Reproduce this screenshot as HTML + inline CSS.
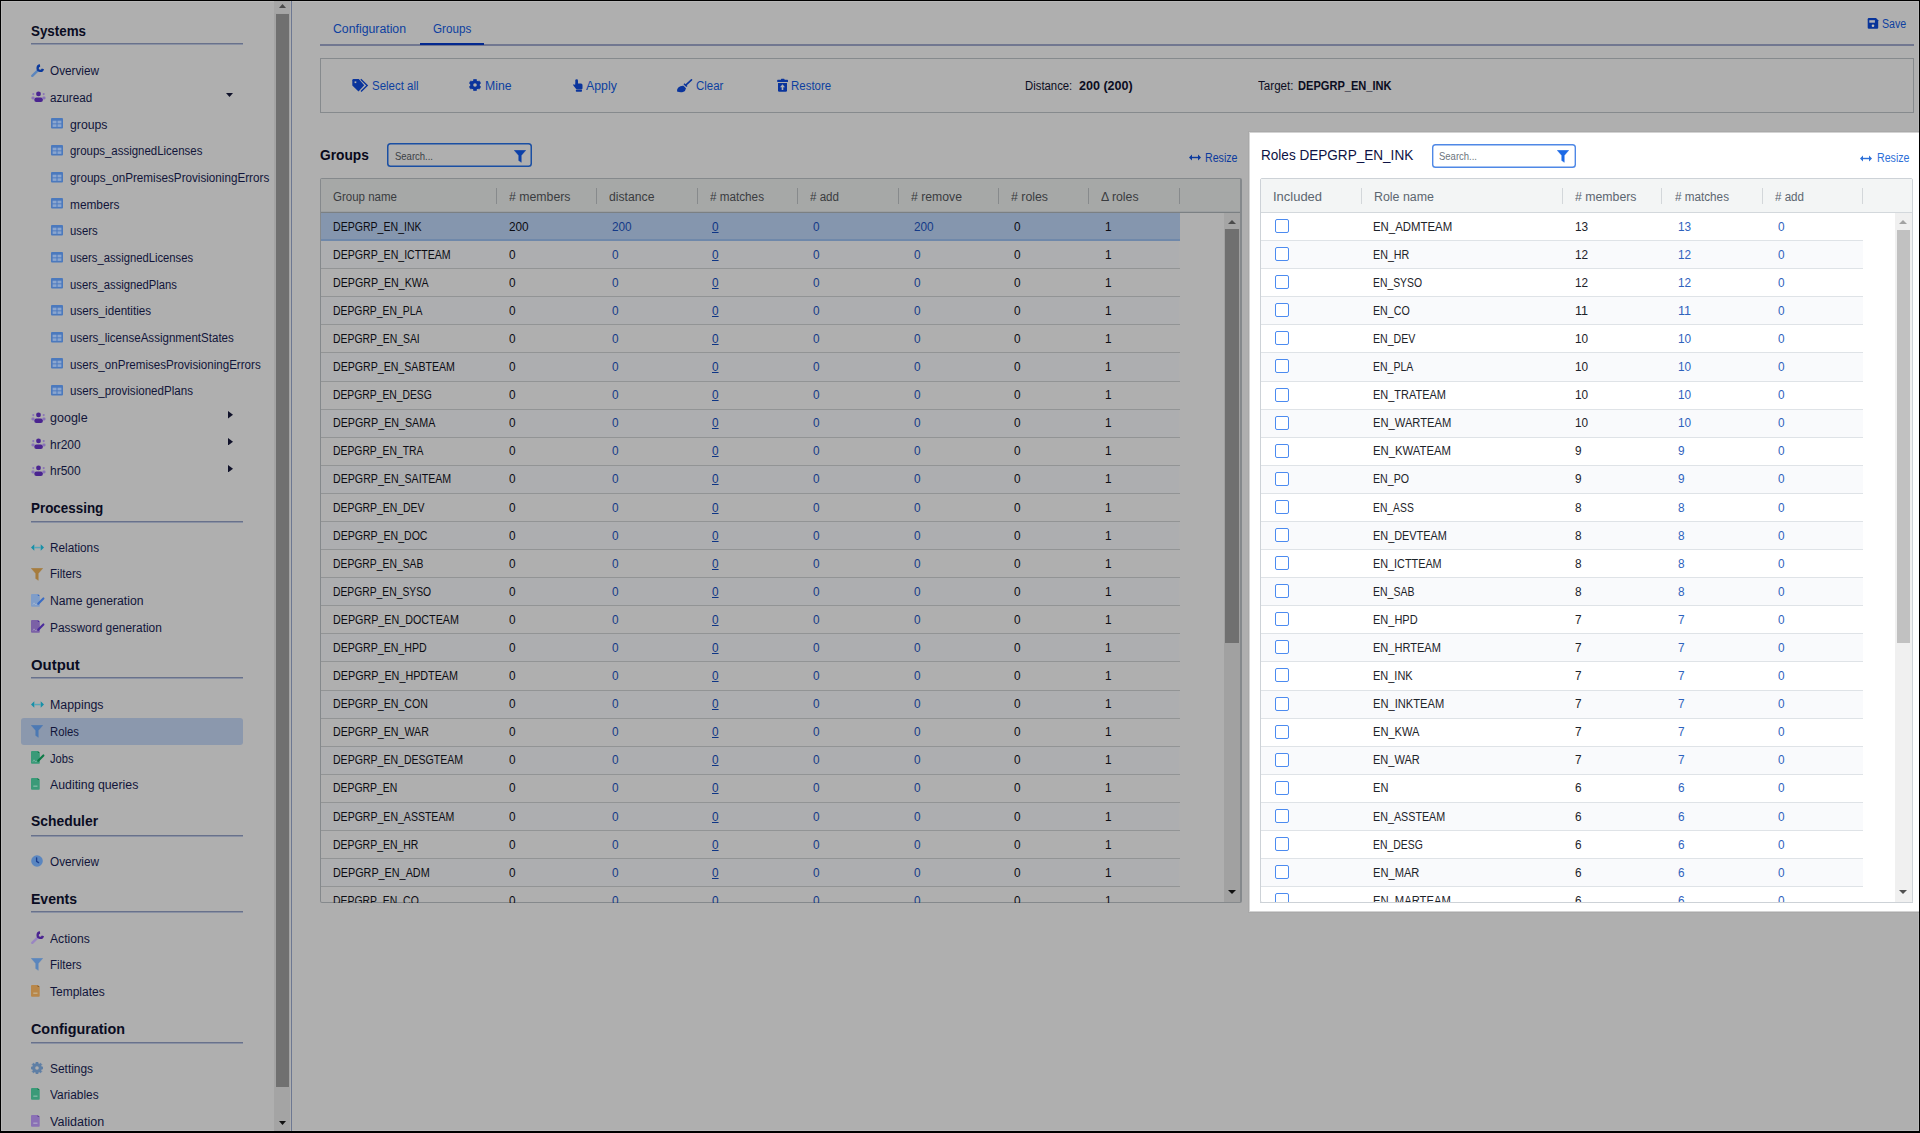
<!DOCTYPE html>
<html><head><meta charset="utf-8"><style>
html,body{margin:0;padding:0;}
body{width:1920px;height:1133px;position:relative;overflow:hidden;font-family:"Liberation Sans",sans-serif;}
.b{position:absolute;display:block;}
.t{position:absolute;white-space:nowrap;line-height:1;transform-origin:0 0;}
</style></head>
<body>
<div class="b" style="left:0px;top:0px;width:1920px;height:1133px;background:#000;"></div>
<div class="b" style="left:1px;top:1px;width:1918px;height:1130px;background:#afafaf;box-sizing:border-box;border:1px solid #b9b9b9;"></div>
<div class="t" style="left:31.00px;top:22.88px;font-size:15.5px;color:#0a0c22;font-weight:700;transform:scaleX(0.863);">Systems</div>
<div class="b" style="left:31px;top:43px;width:212px;height:1px;background:#68718b;"></div>
<div class="b" style="left:31px;top:44px;width:212px;height:1px;background:#8a91a3;"></div>
<div class="t" style="left:50.00px;top:65.34px;font-size:12px;color:#11153a;transform:scaleX(0.980);">Overview</div>
<svg class="b" style="left:30.5px;top:63.5px" width="14" height="14" viewBox="0 0 14 14"><path d="M1.3 11.8 L6.9 6.3" stroke="#5c86bd" stroke-width="2.4" stroke-linecap="round"/><path d="M9.06 1.51 A2.7 2.7 0 1 0 11.91 4.90" stroke="#0c3a9c" stroke-width="2.3" fill="none" stroke-linecap="butt"/></svg>
<div class="t" style="left:50.00px;top:92.01px;font-size:12px;color:#11153a;transform:scaleX(0.971);">azuread</div>
<svg class="b" style="left:31px;top:91.47px" width="15" height="12" viewBox="0 0 15 12"><circle cx="7.5" cy="2.9" r="2.4" fill="#4a2490"/><rect x="3.3" y="6.6" width="8.6" height="4.3" rx="2" fill="#4a2490"/><circle cx="2.3" cy="3.1" r="1.05" fill="#8a74b8"/><circle cx="12.7" cy="3.1" r="1.05" fill="#8a74b8"/><rect x="0.4" y="5.6" width="3.3" height="2.8" rx="1.3" fill="#8a74b8"/><rect x="11.3" y="5.6" width="3.3" height="2.8" rx="1.3" fill="#8a74b8"/></svg>
<div class="t" style="left:70.00px;top:118.68px;font-size:12px;color:#11153a;transform:scaleX(1.022);">groups</div>
<svg class="b" style="left:51px;top:118.44px" width="12" height="11" viewBox="0 0 12 11"><rect x="0" y="0" width="12" height="10.5" rx="1" fill="#4b79bd"/><rect x="1.6" y="2.7" width="3.9" height="2.7" fill="#8ba6cf"/><rect x="6.5" y="2.7" width="3.9" height="2.7" fill="#8ba6cf"/><rect x="1.6" y="6.3" width="3.9" height="2.6" fill="#8ba6cf"/><rect x="6.5" y="6.3" width="3.9" height="2.6" fill="#8ba6cf"/></svg>
<div class="t" style="left:70.00px;top:145.35px;font-size:12px;color:#11153a;transform:scaleX(0.954);">groups_assignedLicenses</div>
<svg class="b" style="left:51px;top:145.10999999999999px" width="12" height="11" viewBox="0 0 12 11"><rect x="0" y="0" width="12" height="10.5" rx="1" fill="#4b79bd"/><rect x="1.6" y="2.7" width="3.9" height="2.7" fill="#8ba6cf"/><rect x="6.5" y="2.7" width="3.9" height="2.7" fill="#8ba6cf"/><rect x="1.6" y="6.3" width="3.9" height="2.6" fill="#8ba6cf"/><rect x="6.5" y="6.3" width="3.9" height="2.6" fill="#8ba6cf"/></svg>
<div class="t" style="left:70.00px;top:172.02px;font-size:12px;color:#11153a;transform:scaleX(0.973);">groups_onPremisesProvisioningErrors</div>
<svg class="b" style="left:51px;top:171.78px" width="12" height="11" viewBox="0 0 12 11"><rect x="0" y="0" width="12" height="10.5" rx="1" fill="#4b79bd"/><rect x="1.6" y="2.7" width="3.9" height="2.7" fill="#8ba6cf"/><rect x="6.5" y="2.7" width="3.9" height="2.7" fill="#8ba6cf"/><rect x="1.6" y="6.3" width="3.9" height="2.6" fill="#8ba6cf"/><rect x="6.5" y="6.3" width="3.9" height="2.6" fill="#8ba6cf"/></svg>
<div class="t" style="left:70.00px;top:198.69px;font-size:12px;color:#11153a;transform:scaleX(0.988);">members</div>
<svg class="b" style="left:51px;top:198.45000000000002px" width="12" height="11" viewBox="0 0 12 11"><rect x="0" y="0" width="12" height="10.5" rx="1" fill="#4b79bd"/><rect x="1.6" y="2.7" width="3.9" height="2.7" fill="#8ba6cf"/><rect x="6.5" y="2.7" width="3.9" height="2.7" fill="#8ba6cf"/><rect x="1.6" y="6.3" width="3.9" height="2.6" fill="#8ba6cf"/><rect x="6.5" y="6.3" width="3.9" height="2.6" fill="#8ba6cf"/></svg>
<div class="t" style="left:70.00px;top:225.36px;font-size:12px;color:#11153a;transform:scaleX(0.943);">users</div>
<svg class="b" style="left:51px;top:225.12px" width="12" height="11" viewBox="0 0 12 11"><rect x="0" y="0" width="12" height="10.5" rx="1" fill="#4b79bd"/><rect x="1.6" y="2.7" width="3.9" height="2.7" fill="#8ba6cf"/><rect x="6.5" y="2.7" width="3.9" height="2.7" fill="#8ba6cf"/><rect x="1.6" y="6.3" width="3.9" height="2.6" fill="#8ba6cf"/><rect x="6.5" y="6.3" width="3.9" height="2.6" fill="#8ba6cf"/></svg>
<div class="t" style="left:70.00px;top:252.03px;font-size:12px;color:#11153a;transform:scaleX(0.936);">users_assignedLicenses</div>
<svg class="b" style="left:51px;top:251.79px" width="12" height="11" viewBox="0 0 12 11"><rect x="0" y="0" width="12" height="10.5" rx="1" fill="#4b79bd"/><rect x="1.6" y="2.7" width="3.9" height="2.7" fill="#8ba6cf"/><rect x="6.5" y="2.7" width="3.9" height="2.7" fill="#8ba6cf"/><rect x="1.6" y="6.3" width="3.9" height="2.6" fill="#8ba6cf"/><rect x="6.5" y="6.3" width="3.9" height="2.6" fill="#8ba6cf"/></svg>
<div class="t" style="left:70.00px;top:278.70px;font-size:12px;color:#11153a;transform:scaleX(0.938);">users_assignedPlans</div>
<svg class="b" style="left:51px;top:278.46000000000004px" width="12" height="11" viewBox="0 0 12 11"><rect x="0" y="0" width="12" height="10.5" rx="1" fill="#4b79bd"/><rect x="1.6" y="2.7" width="3.9" height="2.7" fill="#8ba6cf"/><rect x="6.5" y="2.7" width="3.9" height="2.7" fill="#8ba6cf"/><rect x="1.6" y="6.3" width="3.9" height="2.6" fill="#8ba6cf"/><rect x="6.5" y="6.3" width="3.9" height="2.6" fill="#8ba6cf"/></svg>
<div class="t" style="left:70.00px;top:305.37px;font-size:12px;color:#11153a;transform:scaleX(0.973);">users_identities</div>
<svg class="b" style="left:51px;top:305.13000000000005px" width="12" height="11" viewBox="0 0 12 11"><rect x="0" y="0" width="12" height="10.5" rx="1" fill="#4b79bd"/><rect x="1.6" y="2.7" width="3.9" height="2.7" fill="#8ba6cf"/><rect x="6.5" y="2.7" width="3.9" height="2.7" fill="#8ba6cf"/><rect x="1.6" y="6.3" width="3.9" height="2.6" fill="#8ba6cf"/><rect x="6.5" y="6.3" width="3.9" height="2.6" fill="#8ba6cf"/></svg>
<div class="t" style="left:70.00px;top:332.04px;font-size:12px;color:#11153a;transform:scaleX(0.963);">users_licenseAssignmentStates</div>
<svg class="b" style="left:51px;top:331.80000000000007px" width="12" height="11" viewBox="0 0 12 11"><rect x="0" y="0" width="12" height="10.5" rx="1" fill="#4b79bd"/><rect x="1.6" y="2.7" width="3.9" height="2.7" fill="#8ba6cf"/><rect x="6.5" y="2.7" width="3.9" height="2.7" fill="#8ba6cf"/><rect x="1.6" y="6.3" width="3.9" height="2.6" fill="#8ba6cf"/><rect x="6.5" y="6.3" width="3.9" height="2.6" fill="#8ba6cf"/></svg>
<div class="t" style="left:70.00px;top:358.71px;font-size:12px;color:#11153a;transform:scaleX(0.966);">users_onPremisesProvisioningErrors</div>
<svg class="b" style="left:51px;top:358.47px" width="12" height="11" viewBox="0 0 12 11"><rect x="0" y="0" width="12" height="10.5" rx="1" fill="#4b79bd"/><rect x="1.6" y="2.7" width="3.9" height="2.7" fill="#8ba6cf"/><rect x="6.5" y="2.7" width="3.9" height="2.7" fill="#8ba6cf"/><rect x="1.6" y="6.3" width="3.9" height="2.6" fill="#8ba6cf"/><rect x="6.5" y="6.3" width="3.9" height="2.6" fill="#8ba6cf"/></svg>
<div class="t" style="left:70.00px;top:385.38px;font-size:12px;color:#11153a;transform:scaleX(0.965);">users_provisionedPlans</div>
<svg class="b" style="left:51px;top:385.14000000000004px" width="12" height="11" viewBox="0 0 12 11"><rect x="0" y="0" width="12" height="10.5" rx="1" fill="#4b79bd"/><rect x="1.6" y="2.7" width="3.9" height="2.7" fill="#8ba6cf"/><rect x="6.5" y="2.7" width="3.9" height="2.7" fill="#8ba6cf"/><rect x="1.6" y="6.3" width="3.9" height="2.6" fill="#8ba6cf"/><rect x="6.5" y="6.3" width="3.9" height="2.6" fill="#8ba6cf"/></svg>
<div class="t" style="left:50.00px;top:412.05px;font-size:12px;color:#11153a;transform:scaleX(1.044);">google</div>
<svg class="b" style="left:31px;top:411.51000000000005px" width="15" height="12" viewBox="0 0 15 12"><circle cx="7.5" cy="2.9" r="2.4" fill="#4a2490"/><rect x="3.3" y="6.6" width="8.6" height="4.3" rx="2" fill="#4a2490"/><circle cx="2.3" cy="3.1" r="1.05" fill="#8a74b8"/><circle cx="12.7" cy="3.1" r="1.05" fill="#8a74b8"/><rect x="0.4" y="5.6" width="3.3" height="2.8" rx="1.3" fill="#8a74b8"/><rect x="11.3" y="5.6" width="3.3" height="2.8" rx="1.3" fill="#8a74b8"/></svg>
<div class="t" style="left:50.00px;top:438.72px;font-size:12px;color:#11153a;">hr200</div>
<svg class="b" style="left:31px;top:438.18px" width="15" height="12" viewBox="0 0 15 12"><circle cx="7.5" cy="2.9" r="2.4" fill="#4a2490"/><rect x="3.3" y="6.6" width="8.6" height="4.3" rx="2" fill="#4a2490"/><circle cx="2.3" cy="3.1" r="1.05" fill="#8a74b8"/><circle cx="12.7" cy="3.1" r="1.05" fill="#8a74b8"/><rect x="0.4" y="5.6" width="3.3" height="2.8" rx="1.3" fill="#8a74b8"/><rect x="11.3" y="5.6" width="3.3" height="2.8" rx="1.3" fill="#8a74b8"/></svg>
<div class="t" style="left:50.00px;top:465.39px;font-size:12px;color:#11153a;">hr500</div>
<svg class="b" style="left:31px;top:464.85px" width="15" height="12" viewBox="0 0 15 12"><circle cx="7.5" cy="2.9" r="2.4" fill="#4a2490"/><rect x="3.3" y="6.6" width="8.6" height="4.3" rx="2" fill="#4a2490"/><circle cx="2.3" cy="3.1" r="1.05" fill="#8a74b8"/><circle cx="12.7" cy="3.1" r="1.05" fill="#8a74b8"/><rect x="0.4" y="5.6" width="3.3" height="2.8" rx="1.3" fill="#8a74b8"/><rect x="11.3" y="5.6" width="3.3" height="2.8" rx="1.3" fill="#8a74b8"/></svg>
<svg class="b" style="left:225.5px;top:93px" width="7" height="4" viewBox="0 0 7 4"><path d="M0 0 H7 L3.5 4Z" fill="#10122a"/></svg>
<svg class="b" style="left:228px;top:411.31000000000006px" width="5" height="7.5" viewBox="0 0 5 7.5"><path d="M0 0 V7.5 L5 3.75Z" fill="#10122a"/></svg>
<svg class="b" style="left:228px;top:437.98px" width="5" height="7.5" viewBox="0 0 5 7.5"><path d="M0 0 V7.5 L5 3.75Z" fill="#10122a"/></svg>
<svg class="b" style="left:228px;top:464.65000000000003px" width="5" height="7.5" viewBox="0 0 5 7.5"><path d="M0 0 V7.5 L5 3.75Z" fill="#10122a"/></svg>
<div class="t" style="left:31.00px;top:499.88px;font-size:15.5px;color:#0a0c22;font-weight:700;transform:scaleX(0.865);">Processing</div>
<div class="b" style="left:31px;top:521px;width:212px;height:1px;background:#68718b;"></div>
<div class="b" style="left:31px;top:522px;width:212px;height:1px;background:#8a91a3;"></div>
<div class="t" style="left:50.00px;top:541.74px;font-size:12px;color:#11153a;transform:scaleX(0.980);">Relations</div>
<div class="t" style="left:50.00px;top:568.41px;font-size:12px;color:#11153a;transform:scaleX(0.965);">Filters</div>
<div class="t" style="left:50.00px;top:595.08px;font-size:12px;color:#11153a;transform:scaleX(1.016);">Name generation</div>
<div class="t" style="left:50.00px;top:621.75px;font-size:12px;color:#11153a;transform:scaleX(0.992);">Password generation</div>
<svg class="b" style="left:31px;top:544px" width="13" height="7" viewBox="0 0 13 7"><path d="M0 3.5 L3.3 0.3 V6.7Z M13 3.5 L9.7 0.3 V6.7Z" fill="#1790a8"/><rect x="3" y="2.8" width="7" height="1.5" fill="#5aa7b8"/></svg>
<svg class="b" style="left:31px;top:568px" width="12" height="13" viewBox="0 0 12 13"><path d="M0.2 0.3 H11.8 L7.3 5.4 V12.3 L4.7 10.6 V5.4Z" fill="#a67c3d" stroke="#a67c3d" stroke-width=".4" stroke-linejoin="round"/></svg>
<svg class="b" style="left:31.3px;top:593.6px" width="14" height="13" viewBox="0 0 14 13"><path d="M0 1 Q0 0 1 0 H6.8 L8.8 2 V12 Q8.8 12.8 8 12.8 H1 Q0 12.8 0 12Z" fill="#7f9dc8"/><path d="M6.8 0 L8.8 2 H6.8Z" fill="#3a6cc4"/><path d="M7.2 9.8 L12.4 4.4" stroke="#3a6cc4" stroke-width="2.1" stroke-linecap="round"/><path d="M1.8 10.8 L3 8.8 L4.2 10.6 L6 10.2" stroke="#cfd6dd" stroke-width=".6" fill="none" opacity=".6"/></svg>
<svg class="b" style="left:31.3px;top:620.3px" width="14" height="13" viewBox="0 0 14 13"><path d="M0 1 Q0 0 1 0 H6.8 L8.8 2 V12 Q8.8 12.8 8 12.8 H1 Q0 12.8 0 12Z" fill="#7b61a6"/><path d="M6.8 0 L8.8 2 H6.8Z" fill="#4a2b9c"/><path d="M7.2 9.8 L12.4 4.4" stroke="#4a2b9c" stroke-width="2.1" stroke-linecap="round"/><path d="M1.8 10.8 L3 8.8 L4.2 10.6 L6 10.2" stroke="#cfd6dd" stroke-width=".6" fill="none" opacity=".6"/></svg>
<div class="t" style="left:31.00px;top:656.88px;font-size:15.5px;color:#0a0c22;font-weight:700;transform:scaleX(0.961);">Output</div>
<div class="b" style="left:31px;top:677.3px;width:212px;height:1px;background:#68718b;"></div>
<div class="b" style="left:31px;top:678.3px;width:212px;height:1px;background:#8a91a3;"></div>
<div class="b" style="left:21px;top:717.5px;width:222px;height:27px;background:#8b98ad;border-radius:3px;"></div>
<div class="t" style="left:50.00px;top:699.24px;font-size:12px;color:#11153a;transform:scaleX(1.029);">Mappings</div>
<div class="t" style="left:50.00px;top:725.91px;font-size:12px;color:#11153a;transform:scaleX(0.940);">Roles</div>
<div class="t" style="left:50.00px;top:752.58px;font-size:12px;color:#11153a;transform:scaleX(0.930);">Jobs</div>
<div class="t" style="left:50.00px;top:779.25px;font-size:12px;color:#11153a;transform:scaleX(1.026);">Auditing queries</div>
<svg class="b" style="left:31px;top:701px" width="13" height="7" viewBox="0 0 13 7"><path d="M0 3.5 L3.3 0.3 V6.7Z M13 3.5 L9.7 0.3 V6.7Z" fill="#1790a8"/><rect x="3" y="2.8" width="7" height="1.5" fill="#5aa7b8"/></svg>
<svg class="b" style="left:31px;top:724.5px" width="12" height="13" viewBox="0 0 12 13"><path d="M0.2 0.3 H11.8 L7.3 5.4 V12.3 L4.7 10.6 V5.4Z" fill="#4c79b4" stroke="#4c79b4" stroke-width=".4" stroke-linejoin="round"/></svg>
<svg class="b" style="left:31.3px;top:751px" width="14" height="13" viewBox="0 0 14 13"><path d="M0 1 Q0 0 1 0 H6.8 L8.8 2 V12 Q8.8 12.8 8 12.8 H1 Q0 12.8 0 12Z" fill="#3a9a78"/><path d="M6.8 0 L8.8 2 H6.8Z" fill="#0b7a45"/><path d="M7.2 9.8 L12.4 4.4" stroke="#0b7a45" stroke-width="2.1" stroke-linecap="round"/><path d="M1.8 10.8 L3 8.8 L4.2 10.6 L6 10.2" stroke="#cfd6dd" stroke-width=".6" fill="none" opacity=".6"/></svg>
<svg class="b" style="left:31.3px;top:778px" width="10" height="13" viewBox="0 0 10 13"><path d="M0 1 Q0 0 1 0 H6.6 L8.7 2.1 V11 Q8.7 11.8 7.9 11.8 H1 Q0 11.8 0 11Z" fill="#3a9a78"/><path d="M6.6 0 L8.7 2.1 H6.6Z" fill="#0b7a45"/><rect x="2.3" y="7.6" width="4.2" height="1.1" fill="#d8e6de" opacity=".55"/></svg>
<div class="t" style="left:31.00px;top:813.38px;font-size:15.5px;color:#0a0c22;font-weight:700;transform:scaleX(0.895);">Scheduler</div>
<div class="b" style="left:31px;top:835px;width:212px;height:1px;background:#68718b;"></div>
<div class="b" style="left:31px;top:836px;width:212px;height:1px;background:#8a91a3;"></div>
<div class="t" style="left:50.00px;top:855.74px;font-size:12px;color:#11153a;transform:scaleX(0.980);">Overview</div>
<svg class="b" style="left:31.3px;top:854.6px" width="12" height="12" viewBox="0 0 12 12"><circle cx="6" cy="6" r="5.8" fill="#5a86c0"/><path d="M5.6 2.8 V6.4 L7.6 7.6" stroke="#1c3f8e" stroke-width="1.3" fill="none" stroke-linecap="round"/></svg>
<div class="t" style="left:31.00px;top:890.68px;font-size:15.5px;color:#0a0c22;font-weight:700;transform:scaleX(0.905);">Events</div>
<div class="b" style="left:31px;top:911px;width:212px;height:1px;background:#68718b;"></div>
<div class="b" style="left:31px;top:912px;width:212px;height:1px;background:#8a91a3;"></div>
<div class="t" style="left:50.00px;top:932.64px;font-size:12px;color:#11153a;transform:scaleX(1.011);">Actions</div>
<div class="t" style="left:50.00px;top:959.31px;font-size:12px;color:#11153a;transform:scaleX(0.965);">Filters</div>
<div class="t" style="left:50.00px;top:985.98px;font-size:12px;color:#11153a;">Templates</div>
<svg class="b" style="left:30.5px;top:931px" width="14" height="14" viewBox="0 0 14 14"><path d="M1.3 11.8 L6.9 6.3" stroke="#9a86c2" stroke-width="2.4" stroke-linecap="round"/><path d="M9.06 1.51 A2.7 2.7 0 1 0 11.91 4.90" stroke="#4b2490" stroke-width="2.3" fill="none" stroke-linecap="butt"/></svg>
<svg class="b" style="left:31.3px;top:957.8px" width="12" height="13" viewBox="0 0 12 13"><path d="M0.2 0.3 H11.8 L7.3 5.4 V12.3 L4.7 10.6 V5.4Z" fill="#5b86bd" stroke="#5b86bd" stroke-width=".4" stroke-linejoin="round"/></svg>
<svg class="b" style="left:31.3px;top:985px" width="10" height="13" viewBox="0 0 10 13"><path d="M0 1 Q0 0 1 0 H6.6 L8.7 2.1 V11 Q8.7 11.8 7.9 11.8 H1 Q0 11.8 0 11Z" fill="#b8874a"/><path d="M6.6 0 L8.7 2.1 H6.6Z" fill="#8a5a20"/><rect x="2.3" y="7.6" width="4.2" height="1.1" fill="#d8e6de" opacity=".55"/></svg>
<div class="t" style="left:31.00px;top:1020.58px;font-size:15.5px;color:#0a0c22;font-weight:700;transform:scaleX(0.926);">Configuration</div>
<div class="b" style="left:31px;top:1042px;width:212px;height:1px;background:#68718b;"></div>
<div class="b" style="left:31px;top:1043px;width:212px;height:1px;background:#8a91a3;"></div>
<div class="t" style="left:50.00px;top:1062.74px;font-size:12px;color:#11153a;transform:scaleX(0.993);">Settings</div>
<div class="t" style="left:50.00px;top:1089.41px;font-size:12px;color:#11153a;transform:scaleX(0.989);">Variables</div>
<div class="t" style="left:50.00px;top:1116.08px;font-size:12px;color:#11153a;transform:scaleX(1.044);">Validation</div>
<svg class="b" style="left:31px;top:1061.5px" width="12" height="12" viewBox="0 0 12 12"><polygon points="4.82,1.72 4.97,0.09 7.03,0.09 7.18,1.72 8.19,2.14 9.45,1.09 10.91,2.55 9.86,3.81 10.28,4.82 11.91,4.97 11.91,7.03 10.28,7.18 9.86,8.19 10.91,9.45 9.45,10.91 8.19,9.86 7.18,10.28 7.03,11.91 4.97,11.91 4.82,10.28 3.81,9.86 2.55,10.91 1.09,9.45 2.14,8.19 1.72,7.18 0.09,7.03 0.09,4.97 1.72,4.82 2.14,3.81 1.09,2.55 2.55,1.09 3.81,2.14" fill="#5f7fa5" stroke="#5f7fa5" stroke-width=".5" stroke-linejoin="round"/><circle cx="6.0" cy="6.0" r="4.5600000000000005" fill="#5f7fa5"/><circle cx="6.0" cy="6.0" r="1.7999999999999998" fill="#afafaf"/></svg>
<svg class="b" style="left:31.3px;top:1088.3px" width="10" height="13" viewBox="0 0 10 13"><path d="M0 1 Q0 0 1 0 H6.6 L8.7 2.1 V11 Q8.7 11.8 7.9 11.8 H1 Q0 11.8 0 11Z" fill="#3a9a78"/><path d="M6.6 0 L8.7 2.1 H6.6Z" fill="#0b7a45"/><rect x="2.3" y="7.6" width="4.2" height="1.1" fill="#d8e6de" opacity=".55"/></svg>
<svg class="b" style="left:31.3px;top:1115px" width="10" height="13" viewBox="0 0 10 13"><path d="M0 1 Q0 0 1 0 H6.6 L8.7 2.1 V11 Q8.7 11.8 7.9 11.8 H1 Q0 11.8 0 11Z" fill="#8a70b5"/><path d="M6.6 0 L8.7 2.1 H6.6Z" fill="#5a3f8f"/><rect x="2.3" y="7.6" width="4.2" height="1.1" fill="#d8e6de" opacity=".55"/></svg>
<div class="b" style="left:274px;top:1px;width:16px;height:1130px;background:#a4a4a4;"></div>
<div class="b" style="left:274px;top:1px;width:16px;height:12px;background:#a6a6a6;"></div>
<svg class="b" style="left:278.5px;top:4px" width="7" height="4" viewBox="0 0 7 4"><path d="M0 4 H7 L3.5 0Z" fill="#4a4a4a"/></svg>
<div class="b" style="left:276px;top:14px;width:13px;height:1073px;background:#707070;"></div>
<svg class="b" style="left:278.5px;top:1120.5px" width="7" height="4" viewBox="0 0 7 4"><path d="M0 0 H7 L3.5 4Z" fill="#111"/></svg>
<div class="b" style="left:291px;top:1px;width:1px;height:1130px;background:#6d7892;"></div>
<div class="t" style="left:333.00px;top:22.74px;font-size:12px;color:#0d3fa0;transform:scaleX(1.023);">Configuration</div>
<div class="t" style="left:432.80px;top:22.74px;font-size:12px;color:#0d3fa0;transform:scaleX(0.971);">Groups</div>
<div class="b" style="left:320px;top:44px;width:1594px;height:2px;background:#717790;"></div>
<div class="b" style="left:420px;top:43px;width:64px;height:2px;background:#03288f;"></div>
<svg class="b" style="left:1867px;top:17px" width="13" height="13" viewBox="0 0 13 13"><path d="M0.7 2.2 Q0.7 1.1 1.8 1.1 H9 L11.2 3.3 V10.7 Q11.2 11.8 10.1 11.8 H1.8 Q0.7 11.8 0.7 10.7Z" fill="#08349a"/><rect x="2.3" y="3.2" width="5.6" height="2.5" fill="#aeb0b8"/><circle cx="6" cy="8.8" r="1.3" fill="#c8c2b8"/></svg>
<div class="t" style="left:1881.70px;top:17.94px;font-size:12px;color:#0d3fa0;transform:scaleX(0.888);">Save</div>
<div class="b" style="left:320px;top:58px;width:1594px;height:55px;box-sizing:border-box;border:1px solid #868a8d;"></div>
<svg class="b" style="left:351px;top:78px" width="19" height="15" viewBox="0 0 19 15"><path d="M1.3 2.3 Q1.3 1.1 2.5 1.1 H7.8 L13.2 7.3 L7.5 13.4 L1.3 7.6Z" fill="#0a349c"/><rect x="3.6" y="3.4" width="1.7" height="1.7" fill="#b3b3b3"/><path d="M9.8 1.3 L16.2 7.4 L10 13.5" stroke="#0a349c" stroke-width="1.4" fill="none"/></svg>
<div class="t" style="left:371.50px;top:79.64px;font-size:12px;color:#0d3fa0;transform:scaleX(0.955);">Select all</div>
<svg class="b" style="left:469px;top:79.3px" width="12" height="12" viewBox="0 0 12 12"><polygon points="4.44,1.84 4.63,0.16 7.37,0.16 7.56,1.84 8.82,2.57 10.37,1.89 11.74,4.27 10.38,5.28 10.38,6.72 11.74,7.73 10.37,10.11 8.82,9.43 7.56,10.16 7.37,11.84 4.63,11.84 4.44,10.16 3.18,9.43 1.63,10.11 0.26,7.73 1.62,6.72 1.62,5.28 0.26,4.27 1.63,1.89 3.18,2.57" fill="#0a349c" stroke="#0a349c" stroke-width=".5" stroke-linejoin="round"/><circle cx="6.0" cy="6.0" r="4.5600000000000005" fill="#0a349c"/><circle cx="6.0" cy="6.0" r="1.7999999999999998" fill="#afafaf"/></svg>
<div class="t" style="left:484.60px;top:79.64px;font-size:12px;color:#0d3fa0;transform:scaleX(1.019);">Mine</div>
<svg class="b" style="left:572px;top:78px" width="12" height="15" viewBox="0 0 12 15"><rect x="3.3" y="1.2" width="2.7" height="7" rx="1.3" fill="#0a349c"/><path d="M1.2 7.2 Q1 6.2 2.2 6.4 L3.5 7 V5.5 H9 Q10.5 5.5 10.5 7 V10.3 Q10.5 11.3 9.5 11.5 H4.5Z" fill="#0a349c"/><rect x="3.8" y="11.8" width="6.2" height="1.9" rx=".8" fill="#0a349c"/></svg>
<div class="t" style="left:586.00px;top:79.64px;font-size:12px;color:#0d3fa0;transform:scaleX(1.026);">Apply</div>
<svg class="b" style="left:676px;top:78px" width="17" height="15" viewBox="0 0 17 15"><path d="M15.5 1.8 L9.5 7.3" stroke="#0a349c" stroke-width="1.6" stroke-linecap="round"/><path d="M8 5.8 L11 8.6" stroke="#0a349c" stroke-width="1.4"/><path d="M1 13.5 Q0.8 11 2.3 9.5 Q4.5 7.5 7.5 7.8 L10 10.3 Q9.8 13 7 14 Q4 14.6 1 13.5Z" fill="#0a349c"/></svg>
<div class="t" style="left:695.50px;top:79.64px;font-size:12px;color:#0d3fa0;transform:scaleX(0.955);">Clear</div>
<svg class="b" style="left:776px;top:78px" width="13" height="15" viewBox="0 0 13 15"><rect x="1.2" y="1.8" width="10.8" height="2.2" rx=".6" fill="#0a349c"/><rect x="5" y="0.8" width="3.5" height="1.6" rx=".5" fill="#0a349c"/><path d="M2 5 H11 V12.5 Q11 13.7 9.8 13.7 H3.2 Q2 13.7 2 12.5Z" fill="#0a349c"/><path d="M6.5 6.3 L9 9.3 H7.3 V12 H5.7 V9.3 H4Z" fill="#b3b3b3"/></svg>
<div class="t" style="left:791.00px;top:79.64px;font-size:12px;color:#0d3fa0;transform:scaleX(0.956);">Restore</div>
<div class="t" style="left:1024.80px;top:79.64px;font-size:12px;color:#0b0d22;transform:scaleX(0.945);">Distance:</div>
<div class="t" style="left:1078.50px;top:79.64px;font-size:12px;color:#0b0d22;font-weight:700;transform:scaleX(1.045);">200 (200)</div>
<div class="t" style="left:1257.50px;top:79.64px;font-size:12px;color:#0b0d22;transform:scaleX(0.968);">Target:</div>
<div class="t" style="left:1298.20px;top:79.64px;font-size:12px;color:#0b0d22;font-weight:700;transform:scaleX(0.923);">DEPGRP_EN_INK</div>
<div class="t" style="left:320.30px;top:147.10px;font-size:15px;color:#08081a;font-weight:700;transform:scaleX(0.917);">Groups</div>
<div class="b" style="left:387px;top:143px;width:145px;height:24px;box-shadow:inset 0 0 0 1.5px #1a4fa3;border-radius:3.5px;"></div>
<div class="t" style="left:394.50px;top:150.99px;font-size:11px;color:#3b3f45;transform:scaleX(0.863);">Search...</div>
<svg class="b" style="left:513.5px;top:149.5px" width="12" height="13" viewBox="0 0 12 13"><path d="M0.2 0.3 H11.8 L7.3 5.4 V12.3 L4.7 10.6 V5.4Z" fill="#0b3fa8" stroke="#0b3fa8" stroke-width=".4" stroke-linejoin="round"/></svg>
<svg class="b" style="left:1189px;top:154px" width="12" height="7" viewBox="0 0 12 7"><path d="M0 3.5 L3 0.5 V6.5Z M12 3.5 L9 0.5 V6.5Z" fill="#0b3a9e"/><rect x="2.5" y="2.8" width="7" height="1.4" fill="#0b3a9e"/></svg>
<div class="t" style="left:1205.00px;top:151.64px;font-size:12px;color:#0b3a9e;transform:scaleX(0.886);">Resize</div>
<div class="b" style="left:320px;top:178px;width:922px;height:725px;box-sizing:border-box;border:1px solid #85898c;border-right-width:2px;border-radius:2px;"></div>
<div class="b" style="left:321px;top:179px;width:919px;height:33px;background:#a6a8a7;"></div>
<div class="b" style="left:321px;top:211px;width:919px;height:1px;background:#9c9fa1;"></div>
<div class="b" style="left:321px;top:212px;width:919px;height:1px;background:#7b8083;"></div>
<div class="b" style="left:496px;top:188px;width:1px;height:16px;background:#878a8c;"></div>
<div class="b" style="left:596px;top:188px;width:1px;height:16px;background:#878a8c;"></div>
<div class="b" style="left:697px;top:188px;width:1px;height:16px;background:#878a8c;"></div>
<div class="b" style="left:797px;top:188px;width:1px;height:16px;background:#878a8c;"></div>
<div class="b" style="left:898px;top:188px;width:1px;height:16px;background:#878a8c;"></div>
<div class="b" style="left:998px;top:188px;width:1px;height:16px;background:#878a8c;"></div>
<div class="b" style="left:1088px;top:188px;width:1px;height:16px;background:#878a8c;"></div>
<div class="b" style="left:1179px;top:188px;width:1px;height:16px;background:#878a8c;"></div>
<div class="t" style="left:333.30px;top:191.04px;font-size:12px;color:#3a3c3f;transform:scaleX(0.959);">Group name</div>
<div class="t" style="left:509.00px;top:191.04px;font-size:12px;color:#3a3c3f;transform:scaleX(1.024);"># members</div>
<div class="t" style="left:609.40px;top:191.04px;font-size:12px;color:#3a3c3f;transform:scaleX(1.018);">distance</div>
<div class="t" style="left:710.00px;top:191.04px;font-size:12px;color:#3a3c3f;transform:scaleX(0.975);"># matches</div>
<div class="t" style="left:810.20px;top:191.04px;font-size:12px;color:#3a3c3f;transform:scaleX(0.966);"># add</div>
<div class="t" style="left:910.60px;top:191.04px;font-size:12px;color:#3a3c3f;transform:scaleX(1.019);"># remove</div>
<div class="t" style="left:1011.00px;top:191.04px;font-size:12px;color:#3a3c3f;transform:scaleX(1.027);"># roles</div>
<div class="t" style="left:1101.00px;top:191.04px;font-size:12px;color:#3a3c3f;transform:scaleX(1.024);">Δ roles</div>
<div class="b" style="left:321px;top:213px;width:919px;height:689px;overflow:hidden;">
<div class="b" style="left:0px;top:-1px;width:859px;height:29px;background:#8596ae;"></div>
<div class="b" style="left:0px;top:26px;width:859px;height:2px;background:#6f88aa;"></div>
<div class="b" style="left:0px;top:28px;width:858px;height:27px;background:#adaeb0;"></div>
<div class="b" style="left:0px;top:55px;width:859px;height:1px;background:#929495;"></div>
<div class="b" style="left:0px;top:83px;width:859px;height:1px;background:#929495;"></div>
<div class="b" style="left:0px;top:84px;width:858px;height:27px;background:#adaeb0;"></div>
<div class="b" style="left:0px;top:111px;width:859px;height:1px;background:#929495;"></div>
<div class="b" style="left:0px;top:139px;width:859px;height:1px;background:#929495;"></div>
<div class="b" style="left:0px;top:140px;width:858px;height:28px;background:#adaeb0;"></div>
<div class="b" style="left:0px;top:168px;width:859px;height:1px;background:#929495;"></div>
<div class="b" style="left:0px;top:196px;width:859px;height:1px;background:#929495;"></div>
<div class="b" style="left:0px;top:197px;width:858px;height:27px;background:#adaeb0;"></div>
<div class="b" style="left:0px;top:224px;width:859px;height:1px;background:#929495;"></div>
<div class="b" style="left:0px;top:252px;width:859px;height:1px;background:#929495;"></div>
<div class="b" style="left:0px;top:253px;width:858px;height:27px;background:#adaeb0;"></div>
<div class="b" style="left:0px;top:280px;width:859px;height:1px;background:#929495;"></div>
<div class="b" style="left:0px;top:308px;width:859px;height:1px;background:#929495;"></div>
<div class="b" style="left:0px;top:309px;width:858px;height:27px;background:#adaeb0;"></div>
<div class="b" style="left:0px;top:336px;width:859px;height:1px;background:#929495;"></div>
<div class="b" style="left:0px;top:364px;width:859px;height:1px;background:#929495;"></div>
<div class="b" style="left:0px;top:365px;width:858px;height:27px;background:#adaeb0;"></div>
<div class="b" style="left:0px;top:392px;width:859px;height:1px;background:#929495;"></div>
<div class="b" style="left:0px;top:420px;width:859px;height:1px;background:#929495;"></div>
<div class="b" style="left:0px;top:421px;width:858px;height:27px;background:#adaeb0;"></div>
<div class="b" style="left:0px;top:448px;width:859px;height:1px;background:#929495;"></div>
<div class="b" style="left:0px;top:477px;width:859px;height:1px;background:#929495;"></div>
<div class="b" style="left:0px;top:478px;width:858px;height:27px;background:#adaeb0;"></div>
<div class="b" style="left:0px;top:505px;width:859px;height:1px;background:#929495;"></div>
<div class="b" style="left:0px;top:533px;width:859px;height:1px;background:#929495;"></div>
<div class="b" style="left:0px;top:534px;width:858px;height:27px;background:#adaeb0;"></div>
<div class="b" style="left:0px;top:561px;width:859px;height:1px;background:#929495;"></div>
<div class="b" style="left:0px;top:589px;width:859px;height:1px;background:#929495;"></div>
<div class="b" style="left:0px;top:590px;width:858px;height:27px;background:#adaeb0;"></div>
<div class="b" style="left:0px;top:617px;width:859px;height:1px;background:#929495;"></div>
<div class="b" style="left:0px;top:645px;width:859px;height:1px;background:#929495;"></div>
<div class="b" style="left:0px;top:646px;width:858px;height:27px;background:#adaeb0;"></div>
<div class="b" style="left:0px;top:673px;width:859px;height:1px;background:#929495;"></div>
<div class="b" style="left:0px;top:701px;width:859px;height:1px;background:#929495;"></div>
</div>
<div class="t" style="left:332.50px;top:220.64px;font-size:12px;color:#0c0c12;transform:scaleX(0.880);">DEPGRP_EN_INK</div>
<div class="t" style="left:509.00px;top:220.64px;font-size:12px;color:#0c0c12;transform:scaleX(0.983);">200</div>
<div class="t" style="left:612.20px;top:220.64px;font-size:12px;color:#143a88;transform:scaleX(0.983);">200</div>
<div class="t" style="left:712.20px;top:220.64px;font-size:12px;color:#0e3585;transform:scaleX(0.982);text-decoration:underline;">0</div>
<div class="t" style="left:812.50px;top:220.64px;font-size:12px;color:#143a88;transform:scaleX(0.982);">0</div>
<div class="t" style="left:913.70px;top:220.64px;font-size:12px;color:#143a88;transform:scaleX(0.983);">200</div>
<div class="t" style="left:1013.50px;top:220.64px;font-size:12px;color:#0c0c12;transform:scaleX(0.982);">0</div>
<div class="t" style="left:1104.70px;top:220.64px;font-size:12px;color:#0c0c12;transform:scaleX(0.982);">1</div>
<div class="t" style="left:332.50px;top:248.73px;font-size:12px;color:#0c0c12;transform:scaleX(0.882);">DEPGRP_EN_ICTTEAM</div>
<div class="t" style="left:509.00px;top:248.73px;font-size:12px;color:#0c0c12;transform:scaleX(0.982);">0</div>
<div class="t" style="left:612.20px;top:248.73px;font-size:12px;color:#143a88;transform:scaleX(0.982);">0</div>
<div class="t" style="left:712.20px;top:248.73px;font-size:12px;color:#0e3585;transform:scaleX(0.982);text-decoration:underline;">0</div>
<div class="t" style="left:812.50px;top:248.73px;font-size:12px;color:#143a88;transform:scaleX(0.982);">0</div>
<div class="t" style="left:913.70px;top:248.73px;font-size:12px;color:#143a88;transform:scaleX(0.982);">0</div>
<div class="t" style="left:1013.50px;top:248.73px;font-size:12px;color:#0c0c12;transform:scaleX(0.982);">0</div>
<div class="t" style="left:1104.70px;top:248.73px;font-size:12px;color:#0c0c12;transform:scaleX(0.982);">1</div>
<div class="t" style="left:332.50px;top:276.82px;font-size:12px;color:#0c0c12;transform:scaleX(0.888);">DEPGRP_EN_KWA</div>
<div class="t" style="left:509.00px;top:276.82px;font-size:12px;color:#0c0c12;transform:scaleX(0.982);">0</div>
<div class="t" style="left:612.20px;top:276.82px;font-size:12px;color:#143a88;transform:scaleX(0.982);">0</div>
<div class="t" style="left:712.20px;top:276.82px;font-size:12px;color:#0e3585;transform:scaleX(0.982);text-decoration:underline;">0</div>
<div class="t" style="left:812.50px;top:276.82px;font-size:12px;color:#143a88;transform:scaleX(0.982);">0</div>
<div class="t" style="left:913.70px;top:276.82px;font-size:12px;color:#143a88;transform:scaleX(0.982);">0</div>
<div class="t" style="left:1013.50px;top:276.82px;font-size:12px;color:#0c0c12;transform:scaleX(0.982);">0</div>
<div class="t" style="left:1104.70px;top:276.82px;font-size:12px;color:#0c0c12;transform:scaleX(0.982);">1</div>
<div class="t" style="left:332.50px;top:304.91px;font-size:12px;color:#0c0c12;transform:scaleX(0.864);">DEPGRP_EN_PLA</div>
<div class="t" style="left:509.00px;top:304.91px;font-size:12px;color:#0c0c12;transform:scaleX(0.982);">0</div>
<div class="t" style="left:612.20px;top:304.91px;font-size:12px;color:#143a88;transform:scaleX(0.982);">0</div>
<div class="t" style="left:712.20px;top:304.91px;font-size:12px;color:#0e3585;transform:scaleX(0.982);text-decoration:underline;">0</div>
<div class="t" style="left:812.50px;top:304.91px;font-size:12px;color:#143a88;transform:scaleX(0.982);">0</div>
<div class="t" style="left:913.70px;top:304.91px;font-size:12px;color:#143a88;transform:scaleX(0.982);">0</div>
<div class="t" style="left:1013.50px;top:304.91px;font-size:12px;color:#0c0c12;transform:scaleX(0.982);">0</div>
<div class="t" style="left:1104.70px;top:304.91px;font-size:12px;color:#0c0c12;transform:scaleX(0.982);">1</div>
<div class="t" style="left:332.50px;top:333.00px;font-size:12px;color:#0c0c12;transform:scaleX(0.867);">DEPGRP_EN_SAI</div>
<div class="t" style="left:509.00px;top:333.00px;font-size:12px;color:#0c0c12;transform:scaleX(0.982);">0</div>
<div class="t" style="left:612.20px;top:333.00px;font-size:12px;color:#143a88;transform:scaleX(0.982);">0</div>
<div class="t" style="left:712.20px;top:333.00px;font-size:12px;color:#0e3585;transform:scaleX(0.982);text-decoration:underline;">0</div>
<div class="t" style="left:812.50px;top:333.00px;font-size:12px;color:#143a88;transform:scaleX(0.982);">0</div>
<div class="t" style="left:913.70px;top:333.00px;font-size:12px;color:#143a88;transform:scaleX(0.982);">0</div>
<div class="t" style="left:1013.50px;top:333.00px;font-size:12px;color:#0c0c12;transform:scaleX(0.982);">0</div>
<div class="t" style="left:1104.70px;top:333.00px;font-size:12px;color:#0c0c12;transform:scaleX(0.982);">1</div>
<div class="t" style="left:332.50px;top:361.09px;font-size:12px;color:#0c0c12;transform:scaleX(0.883);">DEPGRP_EN_SABTEAM</div>
<div class="t" style="left:509.00px;top:361.09px;font-size:12px;color:#0c0c12;transform:scaleX(0.982);">0</div>
<div class="t" style="left:612.20px;top:361.09px;font-size:12px;color:#143a88;transform:scaleX(0.982);">0</div>
<div class="t" style="left:712.20px;top:361.09px;font-size:12px;color:#0e3585;transform:scaleX(0.982);text-decoration:underline;">0</div>
<div class="t" style="left:812.50px;top:361.09px;font-size:12px;color:#143a88;transform:scaleX(0.982);">0</div>
<div class="t" style="left:913.70px;top:361.09px;font-size:12px;color:#143a88;transform:scaleX(0.982);">0</div>
<div class="t" style="left:1013.50px;top:361.09px;font-size:12px;color:#0c0c12;transform:scaleX(0.982);">0</div>
<div class="t" style="left:1104.70px;top:361.09px;font-size:12px;color:#0c0c12;transform:scaleX(0.982);">1</div>
<div class="t" style="left:332.50px;top:389.18px;font-size:12px;color:#0c0c12;transform:scaleX(0.861);">DEPGRP_EN_DESG</div>
<div class="t" style="left:509.00px;top:389.18px;font-size:12px;color:#0c0c12;transform:scaleX(0.982);">0</div>
<div class="t" style="left:612.20px;top:389.18px;font-size:12px;color:#143a88;transform:scaleX(0.982);">0</div>
<div class="t" style="left:712.20px;top:389.18px;font-size:12px;color:#0e3585;transform:scaleX(0.982);text-decoration:underline;">0</div>
<div class="t" style="left:812.50px;top:389.18px;font-size:12px;color:#143a88;transform:scaleX(0.982);">0</div>
<div class="t" style="left:913.70px;top:389.18px;font-size:12px;color:#143a88;transform:scaleX(0.982);">0</div>
<div class="t" style="left:1013.50px;top:389.18px;font-size:12px;color:#0c0c12;transform:scaleX(0.982);">0</div>
<div class="t" style="left:1104.70px;top:389.18px;font-size:12px;color:#0c0c12;transform:scaleX(0.982);">1</div>
<div class="t" style="left:332.50px;top:417.27px;font-size:12px;color:#0c0c12;transform:scaleX(0.892);">DEPGRP_EN_SAMA</div>
<div class="t" style="left:509.00px;top:417.27px;font-size:12px;color:#0c0c12;transform:scaleX(0.982);">0</div>
<div class="t" style="left:612.20px;top:417.27px;font-size:12px;color:#143a88;transform:scaleX(0.982);">0</div>
<div class="t" style="left:712.20px;top:417.27px;font-size:12px;color:#0e3585;transform:scaleX(0.982);text-decoration:underline;">0</div>
<div class="t" style="left:812.50px;top:417.27px;font-size:12px;color:#143a88;transform:scaleX(0.982);">0</div>
<div class="t" style="left:913.70px;top:417.27px;font-size:12px;color:#143a88;transform:scaleX(0.982);">0</div>
<div class="t" style="left:1013.50px;top:417.27px;font-size:12px;color:#0c0c12;transform:scaleX(0.982);">0</div>
<div class="t" style="left:1104.70px;top:417.27px;font-size:12px;color:#0c0c12;transform:scaleX(0.982);">1</div>
<div class="t" style="left:332.50px;top:445.36px;font-size:12px;color:#0c0c12;transform:scaleX(0.864);">DEPGRP_EN_TRA</div>
<div class="t" style="left:509.00px;top:445.36px;font-size:12px;color:#0c0c12;transform:scaleX(0.982);">0</div>
<div class="t" style="left:612.20px;top:445.36px;font-size:12px;color:#143a88;transform:scaleX(0.982);">0</div>
<div class="t" style="left:712.20px;top:445.36px;font-size:12px;color:#0e3585;transform:scaleX(0.982);text-decoration:underline;">0</div>
<div class="t" style="left:812.50px;top:445.36px;font-size:12px;color:#143a88;transform:scaleX(0.982);">0</div>
<div class="t" style="left:913.70px;top:445.36px;font-size:12px;color:#143a88;transform:scaleX(0.982);">0</div>
<div class="t" style="left:1013.50px;top:445.36px;font-size:12px;color:#0c0c12;transform:scaleX(0.982);">0</div>
<div class="t" style="left:1104.70px;top:445.36px;font-size:12px;color:#0c0c12;transform:scaleX(0.982);">1</div>
<div class="t" style="left:332.50px;top:473.45px;font-size:12px;color:#0c0c12;transform:scaleX(0.886);">DEPGRP_EN_SAITEAM</div>
<div class="t" style="left:509.00px;top:473.45px;font-size:12px;color:#0c0c12;transform:scaleX(0.982);">0</div>
<div class="t" style="left:612.20px;top:473.45px;font-size:12px;color:#143a88;transform:scaleX(0.982);">0</div>
<div class="t" style="left:712.20px;top:473.45px;font-size:12px;color:#0e3585;transform:scaleX(0.982);text-decoration:underline;">0</div>
<div class="t" style="left:812.50px;top:473.45px;font-size:12px;color:#143a88;transform:scaleX(0.982);">0</div>
<div class="t" style="left:913.70px;top:473.45px;font-size:12px;color:#143a88;transform:scaleX(0.982);">0</div>
<div class="t" style="left:1013.50px;top:473.45px;font-size:12px;color:#0c0c12;transform:scaleX(0.982);">0</div>
<div class="t" style="left:1104.70px;top:473.45px;font-size:12px;color:#0c0c12;transform:scaleX(0.982);">1</div>
<div class="t" style="left:332.50px;top:501.54px;font-size:12px;color:#0c0c12;transform:scaleX(0.868);">DEPGRP_EN_DEV</div>
<div class="t" style="left:509.00px;top:501.54px;font-size:12px;color:#0c0c12;transform:scaleX(0.982);">0</div>
<div class="t" style="left:612.20px;top:501.54px;font-size:12px;color:#143a88;transform:scaleX(0.982);">0</div>
<div class="t" style="left:712.20px;top:501.54px;font-size:12px;color:#0e3585;transform:scaleX(0.982);text-decoration:underline;">0</div>
<div class="t" style="left:812.50px;top:501.54px;font-size:12px;color:#143a88;transform:scaleX(0.982);">0</div>
<div class="t" style="left:913.70px;top:501.54px;font-size:12px;color:#143a88;transform:scaleX(0.982);">0</div>
<div class="t" style="left:1013.50px;top:501.54px;font-size:12px;color:#0c0c12;transform:scaleX(0.982);">0</div>
<div class="t" style="left:1104.70px;top:501.54px;font-size:12px;color:#0c0c12;transform:scaleX(0.982);">1</div>
<div class="t" style="left:332.50px;top:529.63px;font-size:12px;color:#0c0c12;transform:scaleX(0.880);">DEPGRP_EN_DOC</div>
<div class="t" style="left:509.00px;top:529.63px;font-size:12px;color:#0c0c12;transform:scaleX(0.982);">0</div>
<div class="t" style="left:612.20px;top:529.63px;font-size:12px;color:#143a88;transform:scaleX(0.982);">0</div>
<div class="t" style="left:712.20px;top:529.63px;font-size:12px;color:#0e3585;transform:scaleX(0.982);text-decoration:underline;">0</div>
<div class="t" style="left:812.50px;top:529.63px;font-size:12px;color:#143a88;transform:scaleX(0.982);">0</div>
<div class="t" style="left:913.70px;top:529.63px;font-size:12px;color:#143a88;transform:scaleX(0.982);">0</div>
<div class="t" style="left:1013.50px;top:529.63px;font-size:12px;color:#0c0c12;transform:scaleX(0.982);">0</div>
<div class="t" style="left:1104.70px;top:529.63px;font-size:12px;color:#0c0c12;transform:scaleX(0.982);">1</div>
<div class="t" style="left:332.50px;top:557.72px;font-size:12px;color:#0c0c12;transform:scaleX(0.863);">DEPGRP_EN_SAB</div>
<div class="t" style="left:509.00px;top:557.72px;font-size:12px;color:#0c0c12;transform:scaleX(0.982);">0</div>
<div class="t" style="left:612.20px;top:557.72px;font-size:12px;color:#143a88;transform:scaleX(0.982);">0</div>
<div class="t" style="left:712.20px;top:557.72px;font-size:12px;color:#0e3585;transform:scaleX(0.982);text-decoration:underline;">0</div>
<div class="t" style="left:812.50px;top:557.72px;font-size:12px;color:#143a88;transform:scaleX(0.982);">0</div>
<div class="t" style="left:913.70px;top:557.72px;font-size:12px;color:#143a88;transform:scaleX(0.982);">0</div>
<div class="t" style="left:1013.50px;top:557.72px;font-size:12px;color:#0c0c12;transform:scaleX(0.982);">0</div>
<div class="t" style="left:1104.70px;top:557.72px;font-size:12px;color:#0c0c12;transform:scaleX(0.982);">1</div>
<div class="t" style="left:332.50px;top:585.81px;font-size:12px;color:#0c0c12;transform:scaleX(0.860);">DEPGRP_EN_SYSO</div>
<div class="t" style="left:509.00px;top:585.81px;font-size:12px;color:#0c0c12;transform:scaleX(0.982);">0</div>
<div class="t" style="left:612.20px;top:585.81px;font-size:12px;color:#143a88;transform:scaleX(0.982);">0</div>
<div class="t" style="left:712.20px;top:585.81px;font-size:12px;color:#0e3585;transform:scaleX(0.982);text-decoration:underline;">0</div>
<div class="t" style="left:812.50px;top:585.81px;font-size:12px;color:#143a88;transform:scaleX(0.982);">0</div>
<div class="t" style="left:913.70px;top:585.81px;font-size:12px;color:#143a88;transform:scaleX(0.982);">0</div>
<div class="t" style="left:1013.50px;top:585.81px;font-size:12px;color:#0c0c12;transform:scaleX(0.982);">0</div>
<div class="t" style="left:1104.70px;top:585.81px;font-size:12px;color:#0c0c12;transform:scaleX(0.982);">1</div>
<div class="t" style="left:332.50px;top:613.90px;font-size:12px;color:#0c0c12;transform:scaleX(0.895);">DEPGRP_EN_DOCTEAM</div>
<div class="t" style="left:509.00px;top:613.90px;font-size:12px;color:#0c0c12;transform:scaleX(0.982);">0</div>
<div class="t" style="left:612.20px;top:613.90px;font-size:12px;color:#143a88;transform:scaleX(0.982);">0</div>
<div class="t" style="left:712.20px;top:613.90px;font-size:12px;color:#0e3585;transform:scaleX(0.982);text-decoration:underline;">0</div>
<div class="t" style="left:812.50px;top:613.90px;font-size:12px;color:#143a88;transform:scaleX(0.982);">0</div>
<div class="t" style="left:913.70px;top:613.90px;font-size:12px;color:#143a88;transform:scaleX(0.982);">0</div>
<div class="t" style="left:1013.50px;top:613.90px;font-size:12px;color:#0c0c12;transform:scaleX(0.982);">0</div>
<div class="t" style="left:1104.70px;top:613.90px;font-size:12px;color:#0c0c12;transform:scaleX(0.982);">1</div>
<div class="t" style="left:332.50px;top:641.99px;font-size:12px;color:#0c0c12;transform:scaleX(0.883);">DEPGRP_EN_HPD</div>
<div class="t" style="left:509.00px;top:641.99px;font-size:12px;color:#0c0c12;transform:scaleX(0.982);">0</div>
<div class="t" style="left:612.20px;top:641.99px;font-size:12px;color:#143a88;transform:scaleX(0.982);">0</div>
<div class="t" style="left:712.20px;top:641.99px;font-size:12px;color:#0e3585;transform:scaleX(0.982);text-decoration:underline;">0</div>
<div class="t" style="left:812.50px;top:641.99px;font-size:12px;color:#143a88;transform:scaleX(0.982);">0</div>
<div class="t" style="left:913.70px;top:641.99px;font-size:12px;color:#143a88;transform:scaleX(0.982);">0</div>
<div class="t" style="left:1013.50px;top:641.99px;font-size:12px;color:#0c0c12;transform:scaleX(0.982);">0</div>
<div class="t" style="left:1104.70px;top:641.99px;font-size:12px;color:#0c0c12;transform:scaleX(0.982);">1</div>
<div class="t" style="left:332.50px;top:670.08px;font-size:12px;color:#0c0c12;transform:scaleX(0.897);">DEPGRP_EN_HPDTEAM</div>
<div class="t" style="left:509.00px;top:670.08px;font-size:12px;color:#0c0c12;transform:scaleX(0.982);">0</div>
<div class="t" style="left:612.20px;top:670.08px;font-size:12px;color:#143a88;transform:scaleX(0.982);">0</div>
<div class="t" style="left:712.20px;top:670.08px;font-size:12px;color:#0e3585;transform:scaleX(0.982);text-decoration:underline;">0</div>
<div class="t" style="left:812.50px;top:670.08px;font-size:12px;color:#143a88;transform:scaleX(0.982);">0</div>
<div class="t" style="left:913.70px;top:670.08px;font-size:12px;color:#143a88;transform:scaleX(0.982);">0</div>
<div class="t" style="left:1013.50px;top:670.08px;font-size:12px;color:#0c0c12;transform:scaleX(0.982);">0</div>
<div class="t" style="left:1104.70px;top:670.08px;font-size:12px;color:#0c0c12;transform:scaleX(0.982);">1</div>
<div class="t" style="left:332.50px;top:698.17px;font-size:12px;color:#0c0c12;transform:scaleX(0.884);">DEPGRP_EN_CON</div>
<div class="t" style="left:509.00px;top:698.17px;font-size:12px;color:#0c0c12;transform:scaleX(0.982);">0</div>
<div class="t" style="left:612.20px;top:698.17px;font-size:12px;color:#143a88;transform:scaleX(0.982);">0</div>
<div class="t" style="left:712.20px;top:698.17px;font-size:12px;color:#0e3585;transform:scaleX(0.982);text-decoration:underline;">0</div>
<div class="t" style="left:812.50px;top:698.17px;font-size:12px;color:#143a88;transform:scaleX(0.982);">0</div>
<div class="t" style="left:913.70px;top:698.17px;font-size:12px;color:#143a88;transform:scaleX(0.982);">0</div>
<div class="t" style="left:1013.50px;top:698.17px;font-size:12px;color:#0c0c12;transform:scaleX(0.982);">0</div>
<div class="t" style="left:1104.70px;top:698.17px;font-size:12px;color:#0c0c12;transform:scaleX(0.982);">1</div>
<div class="t" style="left:332.50px;top:726.26px;font-size:12px;color:#0c0c12;transform:scaleX(0.885);">DEPGRP_EN_WAR</div>
<div class="t" style="left:509.00px;top:726.26px;font-size:12px;color:#0c0c12;transform:scaleX(0.982);">0</div>
<div class="t" style="left:612.20px;top:726.26px;font-size:12px;color:#143a88;transform:scaleX(0.982);">0</div>
<div class="t" style="left:712.20px;top:726.26px;font-size:12px;color:#0e3585;transform:scaleX(0.982);text-decoration:underline;">0</div>
<div class="t" style="left:812.50px;top:726.26px;font-size:12px;color:#143a88;transform:scaleX(0.982);">0</div>
<div class="t" style="left:913.70px;top:726.26px;font-size:12px;color:#143a88;transform:scaleX(0.982);">0</div>
<div class="t" style="left:1013.50px;top:726.26px;font-size:12px;color:#0c0c12;transform:scaleX(0.982);">0</div>
<div class="t" style="left:1104.70px;top:726.26px;font-size:12px;color:#0c0c12;transform:scaleX(0.982);">1</div>
<div class="t" style="left:332.50px;top:754.35px;font-size:12px;color:#0c0c12;transform:scaleX(0.879);">DEPGRP_EN_DESGTEAM</div>
<div class="t" style="left:509.00px;top:754.35px;font-size:12px;color:#0c0c12;transform:scaleX(0.982);">0</div>
<div class="t" style="left:612.20px;top:754.35px;font-size:12px;color:#143a88;transform:scaleX(0.982);">0</div>
<div class="t" style="left:712.20px;top:754.35px;font-size:12px;color:#0e3585;transform:scaleX(0.982);text-decoration:underline;">0</div>
<div class="t" style="left:812.50px;top:754.35px;font-size:12px;color:#143a88;transform:scaleX(0.982);">0</div>
<div class="t" style="left:913.70px;top:754.35px;font-size:12px;color:#143a88;transform:scaleX(0.982);">0</div>
<div class="t" style="left:1013.50px;top:754.35px;font-size:12px;color:#0c0c12;transform:scaleX(0.982);">0</div>
<div class="t" style="left:1104.70px;top:754.35px;font-size:12px;color:#0c0c12;transform:scaleX(0.982);">1</div>
<div class="t" style="left:332.50px;top:782.44px;font-size:12px;color:#0c0c12;transform:scaleX(0.869);">DEPGRP_EN</div>
<div class="t" style="left:509.00px;top:782.44px;font-size:12px;color:#0c0c12;transform:scaleX(0.982);">0</div>
<div class="t" style="left:612.20px;top:782.44px;font-size:12px;color:#143a88;transform:scaleX(0.982);">0</div>
<div class="t" style="left:712.20px;top:782.44px;font-size:12px;color:#0e3585;transform:scaleX(0.982);text-decoration:underline;">0</div>
<div class="t" style="left:812.50px;top:782.44px;font-size:12px;color:#143a88;transform:scaleX(0.982);">0</div>
<div class="t" style="left:913.70px;top:782.44px;font-size:12px;color:#143a88;transform:scaleX(0.982);">0</div>
<div class="t" style="left:1013.50px;top:782.44px;font-size:12px;color:#0c0c12;transform:scaleX(0.982);">0</div>
<div class="t" style="left:1104.70px;top:782.44px;font-size:12px;color:#0c0c12;transform:scaleX(0.982);">1</div>
<div class="t" style="left:332.50px;top:810.53px;font-size:12px;color:#0c0c12;transform:scaleX(0.878);">DEPGRP_EN_ASSTEAM</div>
<div class="t" style="left:509.00px;top:810.53px;font-size:12px;color:#0c0c12;transform:scaleX(0.982);">0</div>
<div class="t" style="left:612.20px;top:810.53px;font-size:12px;color:#143a88;transform:scaleX(0.982);">0</div>
<div class="t" style="left:712.20px;top:810.53px;font-size:12px;color:#0e3585;transform:scaleX(0.982);text-decoration:underline;">0</div>
<div class="t" style="left:812.50px;top:810.53px;font-size:12px;color:#143a88;transform:scaleX(0.982);">0</div>
<div class="t" style="left:913.70px;top:810.53px;font-size:12px;color:#143a88;transform:scaleX(0.982);">0</div>
<div class="t" style="left:1013.50px;top:810.53px;font-size:12px;color:#0c0c12;transform:scaleX(0.982);">0</div>
<div class="t" style="left:1104.70px;top:810.53px;font-size:12px;color:#0c0c12;transform:scaleX(0.982);">1</div>
<div class="t" style="left:332.50px;top:838.62px;font-size:12px;color:#0c0c12;transform:scaleX(0.871);">DEPGRP_EN_HR</div>
<div class="t" style="left:509.00px;top:838.62px;font-size:12px;color:#0c0c12;transform:scaleX(0.982);">0</div>
<div class="t" style="left:612.20px;top:838.62px;font-size:12px;color:#143a88;transform:scaleX(0.982);">0</div>
<div class="t" style="left:712.20px;top:838.62px;font-size:12px;color:#0e3585;transform:scaleX(0.982);text-decoration:underline;">0</div>
<div class="t" style="left:812.50px;top:838.62px;font-size:12px;color:#143a88;transform:scaleX(0.982);">0</div>
<div class="t" style="left:913.70px;top:838.62px;font-size:12px;color:#143a88;transform:scaleX(0.982);">0</div>
<div class="t" style="left:1013.50px;top:838.62px;font-size:12px;color:#0c0c12;transform:scaleX(0.982);">0</div>
<div class="t" style="left:1104.70px;top:838.62px;font-size:12px;color:#0c0c12;transform:scaleX(0.982);">1</div>
<div class="t" style="left:332.50px;top:866.71px;font-size:12px;color:#0c0c12;transform:scaleX(0.900);">DEPGRP_EN_ADM</div>
<div class="t" style="left:509.00px;top:866.71px;font-size:12px;color:#0c0c12;transform:scaleX(0.982);">0</div>
<div class="t" style="left:612.20px;top:866.71px;font-size:12px;color:#143a88;transform:scaleX(0.982);">0</div>
<div class="t" style="left:712.20px;top:866.71px;font-size:12px;color:#0e3585;transform:scaleX(0.982);text-decoration:underline;">0</div>
<div class="t" style="left:812.50px;top:866.71px;font-size:12px;color:#143a88;transform:scaleX(0.982);">0</div>
<div class="t" style="left:913.70px;top:866.71px;font-size:12px;color:#143a88;transform:scaleX(0.982);">0</div>
<div class="t" style="left:1013.50px;top:866.71px;font-size:12px;color:#0c0c12;transform:scaleX(0.982);">0</div>
<div class="t" style="left:1104.70px;top:866.71px;font-size:12px;color:#0c0c12;transform:scaleX(0.982);">1</div>
<div class="t" style="left:332.50px;top:894.80px;font-size:12px;color:#0c0c12;transform:scaleX(0.869);">DEPGRP_EN_CO</div>
<div class="t" style="left:509.00px;top:894.80px;font-size:12px;color:#0c0c12;transform:scaleX(0.982);">0</div>
<div class="t" style="left:612.20px;top:894.80px;font-size:12px;color:#143a88;transform:scaleX(0.982);">0</div>
<div class="t" style="left:712.20px;top:894.80px;font-size:12px;color:#0e3585;transform:scaleX(0.982);text-decoration:underline;">0</div>
<div class="t" style="left:812.50px;top:894.80px;font-size:12px;color:#143a88;transform:scaleX(0.982);">0</div>
<div class="t" style="left:913.70px;top:894.80px;font-size:12px;color:#143a88;transform:scaleX(0.982);">0</div>
<div class="t" style="left:1013.50px;top:894.80px;font-size:12px;color:#0c0c12;transform:scaleX(0.982);">0</div>
<div class="t" style="left:1104.70px;top:894.80px;font-size:12px;color:#0c0c12;transform:scaleX(0.982);">1</div>
<div class="b" style="left:1224px;top:213px;width:16px;height:689px;background:#a1a1a1;"></div>
<div class="b" style="left:1224px;top:213px;width:16px;height:16px;background:#a5a5a5;"></div>
<svg class="b" style="left:1228px;top:220px" width="8" height="4" viewBox="0 0 8 4"><path d="M0 4 H8 L4.0 0Z" fill="#4b4b4b"/></svg>
<div class="b" style="left:1225px;top:229px;width:14px;height:414px;background:#707070;"></div>
<svg class="b" style="left:1228px;top:890px" width="8" height="4" viewBox="0 0 8 4"><path d="M0 0 H8 L4.0 4Z" fill="#111"/></svg>
<div class="b" style="left:320px;top:903px;width:930px;height:10px;background:#afafaf;"></div>
<div class="b" style="left:1248px;top:131px;width:671px;height:782px;background:#a9a9a9;"></div>
<div class="b" style="left:1249px;top:132px;width:670px;height:780px;background:#d3d3d3;"></div>
<div class="b" style="left:1250px;top:133px;width:669px;height:778px;background:#ffffff;"></div>
<div class="t" style="left:1261.00px;top:146.90px;font-size:15px;color:#0d1244;transform:scaleX(0.904);">Roles DEPGRP_EN_INK</div>
<div class="b" style="left:1432px;top:143.5px;width:144px;height:24px;box-shadow:inset 0 0 0 1.4px #4f88e6;border-radius:3.5px;"></div>
<div class="t" style="left:1438.50px;top:151.29px;font-size:11px;color:#6c757d;transform:scaleX(0.863);">Search...</div>
<svg class="b" style="left:1557px;top:150px" width="12" height="13" viewBox="0 0 12 13"><path d="M0.2 0.3 H11.8 L7.3 5.4 V12.3 L4.7 10.6 V5.4Z" fill="#1b69e6" stroke="#1b69e6" stroke-width=".4" stroke-linejoin="round"/></svg>
<svg class="b" style="left:1860px;top:154.5px" width="12" height="7" viewBox="0 0 12 7"><path d="M0 3.5 L3 0.5 V6.5Z M12 3.5 L9 0.5 V6.5Z" fill="#2c6fd8"/><rect x="2.5" y="2.8" width="7" height="1.4" fill="#2c6fd8"/></svg>
<div class="t" style="left:1877.00px;top:151.84px;font-size:12px;color:#2c6fd8;transform:scaleX(0.886);">Resize</div>
<div class="b" style="left:1260px;top:178px;width:653px;height:725px;box-sizing:border-box;border:1px solid #cdd2d7;border-radius:2px;"></div>
<div class="b" style="left:1261px;top:179px;width:651px;height:33px;background:#f3f5f5;"></div>
<div class="b" style="left:1261px;top:212px;width:651px;height:1px;background:#d3d8dc;"></div>
<div class="b" style="left:1361px;top:188px;width:1px;height:16px;background:#d3d7da;"></div>
<div class="b" style="left:1562px;top:188px;width:1px;height:16px;background:#d3d7da;"></div>
<div class="b" style="left:1661px;top:188px;width:1px;height:16px;background:#d3d7da;"></div>
<div class="b" style="left:1762px;top:188px;width:1px;height:16px;background:#d3d7da;"></div>
<div class="b" style="left:1862px;top:188px;width:1px;height:16px;background:#d3d7da;"></div>
<div class="t" style="left:1273.40px;top:191.04px;font-size:12px;color:#5c6670;transform:scaleX(1.080);">Included</div>
<div class="t" style="left:1373.50px;top:191.04px;font-size:12px;color:#5c6670;transform:scaleX(1.034);">Role name</div>
<div class="t" style="left:1574.60px;top:191.04px;font-size:12px;color:#5c6670;transform:scaleX(1.024);"># members</div>
<div class="t" style="left:1674.80px;top:191.04px;font-size:12px;color:#5c6670;transform:scaleX(0.975);"># matches</div>
<div class="t" style="left:1775.00px;top:191.04px;font-size:12px;color:#5c6670;transform:scaleX(0.966);"># add</div>
<div class="b" style="left:1261px;top:213px;width:651px;height:689px;overflow:hidden;">
<div class="b" style="left:0px;top:27px;width:602px;height:1px;background:#dfe3e7;"></div>
<div class="b" style="left:14px;top:6px;width:14px;height:14px;box-sizing:border-box;border:1.5px solid #4c8bf0;border-radius:2px;background:#fff;"></div>
<div class="b" style="left:0px;top:28px;width:602px;height:27px;background:#f9fafc;"></div>
<div class="b" style="left:0px;top:55px;width:602px;height:1px;background:#dfe3e7;"></div>
<div class="b" style="left:14px;top:34px;width:14px;height:14px;box-sizing:border-box;border:1.5px solid #4c8bf0;border-radius:2px;background:#fff;"></div>
<div class="b" style="left:0px;top:83px;width:602px;height:1px;background:#dfe3e7;"></div>
<div class="b" style="left:14px;top:62px;width:14px;height:14px;box-sizing:border-box;border:1.5px solid #4c8bf0;border-radius:2px;background:#fff;"></div>
<div class="b" style="left:0px;top:84px;width:602px;height:27px;background:#f9fafc;"></div>
<div class="b" style="left:0px;top:111px;width:602px;height:1px;background:#dfe3e7;"></div>
<div class="b" style="left:14px;top:90px;width:14px;height:14px;box-sizing:border-box;border:1.5px solid #4c8bf0;border-radius:2px;background:#fff;"></div>
<div class="b" style="left:0px;top:139px;width:602px;height:1px;background:#dfe3e7;"></div>
<div class="b" style="left:14px;top:118px;width:14px;height:14px;box-sizing:border-box;border:1.5px solid #4c8bf0;border-radius:2px;background:#fff;"></div>
<div class="b" style="left:0px;top:140px;width:602px;height:28px;background:#f9fafc;"></div>
<div class="b" style="left:0px;top:168px;width:602px;height:1px;background:#dfe3e7;"></div>
<div class="b" style="left:14px;top:146px;width:14px;height:14px;box-sizing:border-box;border:1.5px solid #4c8bf0;border-radius:2px;background:#fff;"></div>
<div class="b" style="left:0px;top:196px;width:602px;height:1px;background:#dfe3e7;"></div>
<div class="b" style="left:14px;top:175px;width:14px;height:14px;box-sizing:border-box;border:1.5px solid #4c8bf0;border-radius:2px;background:#fff;"></div>
<div class="b" style="left:0px;top:197px;width:602px;height:27px;background:#f9fafc;"></div>
<div class="b" style="left:0px;top:224px;width:602px;height:1px;background:#dfe3e7;"></div>
<div class="b" style="left:14px;top:203px;width:14px;height:14px;box-sizing:border-box;border:1.5px solid #4c8bf0;border-radius:2px;background:#fff;"></div>
<div class="b" style="left:0px;top:252px;width:602px;height:1px;background:#dfe3e7;"></div>
<div class="b" style="left:14px;top:231px;width:14px;height:14px;box-sizing:border-box;border:1.5px solid #4c8bf0;border-radius:2px;background:#fff;"></div>
<div class="b" style="left:0px;top:253px;width:602px;height:27px;background:#f9fafc;"></div>
<div class="b" style="left:0px;top:280px;width:602px;height:1px;background:#dfe3e7;"></div>
<div class="b" style="left:14px;top:259px;width:14px;height:14px;box-sizing:border-box;border:1.5px solid #4c8bf0;border-radius:2px;background:#fff;"></div>
<div class="b" style="left:0px;top:308px;width:602px;height:1px;background:#dfe3e7;"></div>
<div class="b" style="left:14px;top:287px;width:14px;height:14px;box-sizing:border-box;border:1.5px solid #4c8bf0;border-radius:2px;background:#fff;"></div>
<div class="b" style="left:0px;top:309px;width:602px;height:27px;background:#f9fafc;"></div>
<div class="b" style="left:0px;top:336px;width:602px;height:1px;background:#dfe3e7;"></div>
<div class="b" style="left:14px;top:315px;width:14px;height:14px;box-sizing:border-box;border:1.5px solid #4c8bf0;border-radius:2px;background:#fff;"></div>
<div class="b" style="left:0px;top:364px;width:602px;height:1px;background:#dfe3e7;"></div>
<div class="b" style="left:14px;top:343px;width:14px;height:14px;box-sizing:border-box;border:1.5px solid #4c8bf0;border-radius:2px;background:#fff;"></div>
<div class="b" style="left:0px;top:365px;width:602px;height:27px;background:#f9fafc;"></div>
<div class="b" style="left:0px;top:392px;width:602px;height:1px;background:#dfe3e7;"></div>
<div class="b" style="left:14px;top:371px;width:14px;height:14px;box-sizing:border-box;border:1.5px solid #4c8bf0;border-radius:2px;background:#fff;"></div>
<div class="b" style="left:0px;top:420px;width:602px;height:1px;background:#dfe3e7;"></div>
<div class="b" style="left:14px;top:399px;width:14px;height:14px;box-sizing:border-box;border:1.5px solid #4c8bf0;border-radius:2px;background:#fff;"></div>
<div class="b" style="left:0px;top:421px;width:602px;height:27px;background:#f9fafc;"></div>
<div class="b" style="left:0px;top:448px;width:602px;height:1px;background:#dfe3e7;"></div>
<div class="b" style="left:14px;top:427px;width:14px;height:14px;box-sizing:border-box;border:1.5px solid #4c8bf0;border-radius:2px;background:#fff;"></div>
<div class="b" style="left:0px;top:477px;width:602px;height:1px;background:#dfe3e7;"></div>
<div class="b" style="left:14px;top:455px;width:14px;height:14px;box-sizing:border-box;border:1.5px solid #4c8bf0;border-radius:2px;background:#fff;"></div>
<div class="b" style="left:0px;top:478px;width:602px;height:27px;background:#f9fafc;"></div>
<div class="b" style="left:0px;top:505px;width:602px;height:1px;background:#dfe3e7;"></div>
<div class="b" style="left:14px;top:484px;width:14px;height:14px;box-sizing:border-box;border:1.5px solid #4c8bf0;border-radius:2px;background:#fff;"></div>
<div class="b" style="left:0px;top:533px;width:602px;height:1px;background:#dfe3e7;"></div>
<div class="b" style="left:14px;top:512px;width:14px;height:14px;box-sizing:border-box;border:1.5px solid #4c8bf0;border-radius:2px;background:#fff;"></div>
<div class="b" style="left:0px;top:534px;width:602px;height:27px;background:#f9fafc;"></div>
<div class="b" style="left:0px;top:561px;width:602px;height:1px;background:#dfe3e7;"></div>
<div class="b" style="left:14px;top:540px;width:14px;height:14px;box-sizing:border-box;border:1.5px solid #4c8bf0;border-radius:2px;background:#fff;"></div>
<div class="b" style="left:0px;top:589px;width:602px;height:1px;background:#dfe3e7;"></div>
<div class="b" style="left:14px;top:568px;width:14px;height:14px;box-sizing:border-box;border:1.5px solid #4c8bf0;border-radius:2px;background:#fff;"></div>
<div class="b" style="left:0px;top:590px;width:602px;height:27px;background:#f9fafc;"></div>
<div class="b" style="left:0px;top:617px;width:602px;height:1px;background:#dfe3e7;"></div>
<div class="b" style="left:14px;top:596px;width:14px;height:14px;box-sizing:border-box;border:1.5px solid #4c8bf0;border-radius:2px;background:#fff;"></div>
<div class="b" style="left:0px;top:645px;width:602px;height:1px;background:#dfe3e7;"></div>
<div class="b" style="left:14px;top:624px;width:14px;height:14px;box-sizing:border-box;border:1.5px solid #4c8bf0;border-radius:2px;background:#fff;"></div>
<div class="b" style="left:0px;top:646px;width:602px;height:27px;background:#f9fafc;"></div>
<div class="b" style="left:0px;top:673px;width:602px;height:1px;background:#dfe3e7;"></div>
<div class="b" style="left:14px;top:652px;width:14px;height:14px;box-sizing:border-box;border:1.5px solid #4c8bf0;border-radius:2px;background:#fff;"></div>
<div class="b" style="left:0px;top:701px;width:602px;height:1px;background:#dfe3e7;"></div>
<div class="b" style="left:14px;top:680px;width:14px;height:14px;box-sizing:border-box;border:1.5px solid #4c8bf0;border-radius:2px;background:#fff;"></div>
</div>
<div class="t" style="left:1372.50px;top:220.64px;font-size:12px;color:#1d2329;transform:scaleX(0.950);">EN_ADMTEAM</div>
<div class="t" style="left:1574.80px;top:220.64px;font-size:12px;color:#1d2329;transform:scaleX(0.983);">13</div>
<div class="t" style="left:1678.00px;top:220.64px;font-size:12px;color:#2f62bd;transform:scaleX(0.983);">13</div>
<div class="t" style="left:1777.50px;top:220.64px;font-size:12px;color:#2f62bd;transform:scaleX(0.982);">0</div>
<div class="t" style="left:1372.50px;top:248.73px;font-size:12px;color:#1d2329;transform:scaleX(0.894);">EN_HR</div>
<div class="t" style="left:1574.80px;top:248.73px;font-size:12px;color:#1d2329;transform:scaleX(0.983);">12</div>
<div class="t" style="left:1678.00px;top:248.73px;font-size:12px;color:#2f62bd;transform:scaleX(0.983);">12</div>
<div class="t" style="left:1777.50px;top:248.73px;font-size:12px;color:#2f62bd;transform:scaleX(0.982);">0</div>
<div class="t" style="left:1372.50px;top:276.82px;font-size:12px;color:#1d2329;transform:scaleX(0.865);">EN_SYSO</div>
<div class="t" style="left:1574.80px;top:276.82px;font-size:12px;color:#1d2329;transform:scaleX(0.983);">12</div>
<div class="t" style="left:1678.00px;top:276.82px;font-size:12px;color:#2f62bd;transform:scaleX(0.983);">12</div>
<div class="t" style="left:1777.50px;top:276.82px;font-size:12px;color:#2f62bd;transform:scaleX(0.982);">0</div>
<div class="t" style="left:1372.50px;top:304.91px;font-size:12px;color:#1d2329;transform:scaleX(0.889);">EN_CO</div>
<div class="t" style="left:1574.80px;top:304.91px;font-size:12px;color:#1d2329;transform:scaleX(1.053);">11</div>
<div class="t" style="left:1678.00px;top:304.91px;font-size:12px;color:#2f62bd;transform:scaleX(1.053);">11</div>
<div class="t" style="left:1777.50px;top:304.91px;font-size:12px;color:#2f62bd;transform:scaleX(0.982);">0</div>
<div class="t" style="left:1372.50px;top:333.00px;font-size:12px;color:#1d2329;transform:scaleX(0.883);">EN_DEV</div>
<div class="t" style="left:1574.80px;top:333.00px;font-size:12px;color:#1d2329;transform:scaleX(0.983);">10</div>
<div class="t" style="left:1678.00px;top:333.00px;font-size:12px;color:#2f62bd;transform:scaleX(0.983);">10</div>
<div class="t" style="left:1777.50px;top:333.00px;font-size:12px;color:#2f62bd;transform:scaleX(0.982);">0</div>
<div class="t" style="left:1372.50px;top:361.09px;font-size:12px;color:#1d2329;transform:scaleX(0.876);">EN_PLA</div>
<div class="t" style="left:1574.80px;top:361.09px;font-size:12px;color:#1d2329;transform:scaleX(0.983);">10</div>
<div class="t" style="left:1678.00px;top:361.09px;font-size:12px;color:#2f62bd;transform:scaleX(0.983);">10</div>
<div class="t" style="left:1777.50px;top:361.09px;font-size:12px;color:#2f62bd;transform:scaleX(0.982);">0</div>
<div class="t" style="left:1372.50px;top:389.18px;font-size:12px;color:#1d2329;transform:scaleX(0.914);">EN_TRATEAM</div>
<div class="t" style="left:1574.80px;top:389.18px;font-size:12px;color:#1d2329;transform:scaleX(0.983);">10</div>
<div class="t" style="left:1678.00px;top:389.18px;font-size:12px;color:#2f62bd;transform:scaleX(0.983);">10</div>
<div class="t" style="left:1777.50px;top:389.18px;font-size:12px;color:#2f62bd;transform:scaleX(0.982);">0</div>
<div class="t" style="left:1372.50px;top:417.27px;font-size:12px;color:#1d2329;transform:scaleX(0.932);">EN_WARTEAM</div>
<div class="t" style="left:1574.80px;top:417.27px;font-size:12px;color:#1d2329;transform:scaleX(0.983);">10</div>
<div class="t" style="left:1678.00px;top:417.27px;font-size:12px;color:#2f62bd;transform:scaleX(0.983);">10</div>
<div class="t" style="left:1777.50px;top:417.27px;font-size:12px;color:#2f62bd;transform:scaleX(0.982);">0</div>
<div class="t" style="left:1372.50px;top:445.36px;font-size:12px;color:#1d2329;transform:scaleX(0.943);">EN_KWATEAM</div>
<div class="t" style="left:1574.80px;top:445.36px;font-size:12px;color:#1d2329;transform:scaleX(0.982);">9</div>
<div class="t" style="left:1678.00px;top:445.36px;font-size:12px;color:#2f62bd;transform:scaleX(0.982);">9</div>
<div class="t" style="left:1777.50px;top:445.36px;font-size:12px;color:#2f62bd;transform:scaleX(0.982);">0</div>
<div class="t" style="left:1372.50px;top:473.45px;font-size:12px;color:#1d2329;transform:scaleX(0.886);">EN_PO</div>
<div class="t" style="left:1574.80px;top:473.45px;font-size:12px;color:#1d2329;transform:scaleX(0.982);">9</div>
<div class="t" style="left:1678.00px;top:473.45px;font-size:12px;color:#2f62bd;transform:scaleX(0.982);">9</div>
<div class="t" style="left:1777.50px;top:473.45px;font-size:12px;color:#2f62bd;transform:scaleX(0.982);">0</div>
<div class="t" style="left:1372.50px;top:501.54px;font-size:12px;color:#1d2329;transform:scaleX(0.861);">EN_ASS</div>
<div class="t" style="left:1574.80px;top:501.54px;font-size:12px;color:#1d2329;transform:scaleX(0.982);">8</div>
<div class="t" style="left:1678.00px;top:501.54px;font-size:12px;color:#2f62bd;transform:scaleX(0.982);">8</div>
<div class="t" style="left:1777.50px;top:501.54px;font-size:12px;color:#2f62bd;transform:scaleX(0.982);">0</div>
<div class="t" style="left:1372.50px;top:529.63px;font-size:12px;color:#1d2329;transform:scaleX(0.908);">EN_DEVTEAM</div>
<div class="t" style="left:1574.80px;top:529.63px;font-size:12px;color:#1d2329;transform:scaleX(0.982);">8</div>
<div class="t" style="left:1678.00px;top:529.63px;font-size:12px;color:#2f62bd;transform:scaleX(0.982);">8</div>
<div class="t" style="left:1777.50px;top:529.63px;font-size:12px;color:#2f62bd;transform:scaleX(0.982);">0</div>
<div class="t" style="left:1372.50px;top:557.72px;font-size:12px;color:#1d2329;transform:scaleX(0.903);">EN_ICTTEAM</div>
<div class="t" style="left:1574.80px;top:557.72px;font-size:12px;color:#1d2329;transform:scaleX(0.982);">8</div>
<div class="t" style="left:1678.00px;top:557.72px;font-size:12px;color:#2f62bd;transform:scaleX(0.982);">8</div>
<div class="t" style="left:1777.50px;top:557.72px;font-size:12px;color:#2f62bd;transform:scaleX(0.982);">0</div>
<div class="t" style="left:1372.50px;top:585.81px;font-size:12px;color:#1d2329;transform:scaleX(0.875);">EN_SAB</div>
<div class="t" style="left:1574.80px;top:585.81px;font-size:12px;color:#1d2329;transform:scaleX(0.982);">8</div>
<div class="t" style="left:1678.00px;top:585.81px;font-size:12px;color:#2f62bd;transform:scaleX(0.982);">8</div>
<div class="t" style="left:1777.50px;top:585.81px;font-size:12px;color:#2f62bd;transform:scaleX(0.982);">0</div>
<div class="t" style="left:1372.50px;top:613.90px;font-size:12px;color:#1d2329;transform:scaleX(0.916);">EN_HPD</div>
<div class="t" style="left:1574.80px;top:613.90px;font-size:12px;color:#1d2329;transform:scaleX(0.982);">7</div>
<div class="t" style="left:1678.00px;top:613.90px;font-size:12px;color:#2f62bd;transform:scaleX(0.982);">7</div>
<div class="t" style="left:1777.50px;top:613.90px;font-size:12px;color:#2f62bd;transform:scaleX(0.982);">0</div>
<div class="t" style="left:1372.50px;top:641.99px;font-size:12px;color:#1d2329;transform:scaleX(0.919);">EN_HRTEAM</div>
<div class="t" style="left:1574.80px;top:641.99px;font-size:12px;color:#1d2329;transform:scaleX(0.982);">7</div>
<div class="t" style="left:1678.00px;top:641.99px;font-size:12px;color:#2f62bd;transform:scaleX(0.982);">7</div>
<div class="t" style="left:1777.50px;top:641.99px;font-size:12px;color:#2f62bd;transform:scaleX(0.982);">0</div>
<div class="t" style="left:1372.50px;top:670.08px;font-size:12px;color:#1d2329;transform:scaleX(0.915);">EN_INK</div>
<div class="t" style="left:1574.80px;top:670.08px;font-size:12px;color:#1d2329;transform:scaleX(0.982);">7</div>
<div class="t" style="left:1678.00px;top:670.08px;font-size:12px;color:#2f62bd;transform:scaleX(0.982);">7</div>
<div class="t" style="left:1777.50px;top:670.08px;font-size:12px;color:#2f62bd;transform:scaleX(0.982);">0</div>
<div class="t" style="left:1372.50px;top:698.17px;font-size:12px;color:#1d2329;transform:scaleX(0.928);">EN_INKTEAM</div>
<div class="t" style="left:1574.80px;top:698.17px;font-size:12px;color:#1d2329;transform:scaleX(0.982);">7</div>
<div class="t" style="left:1678.00px;top:698.17px;font-size:12px;color:#2f62bd;transform:scaleX(0.982);">7</div>
<div class="t" style="left:1777.50px;top:698.17px;font-size:12px;color:#2f62bd;transform:scaleX(0.982);">0</div>
<div class="t" style="left:1372.50px;top:726.26px;font-size:12px;color:#1d2329;transform:scaleX(0.926);">EN_KWA</div>
<div class="t" style="left:1574.80px;top:726.26px;font-size:12px;color:#1d2329;transform:scaleX(0.982);">7</div>
<div class="t" style="left:1678.00px;top:726.26px;font-size:12px;color:#2f62bd;transform:scaleX(0.982);">7</div>
<div class="t" style="left:1777.50px;top:726.26px;font-size:12px;color:#2f62bd;transform:scaleX(0.982);">0</div>
<div class="t" style="left:1372.50px;top:754.35px;font-size:12px;color:#1d2329;transform:scaleX(0.919);">EN_WAR</div>
<div class="t" style="left:1574.80px;top:754.35px;font-size:12px;color:#1d2329;transform:scaleX(0.982);">7</div>
<div class="t" style="left:1678.00px;top:754.35px;font-size:12px;color:#2f62bd;transform:scaleX(0.982);">7</div>
<div class="t" style="left:1777.50px;top:754.35px;font-size:12px;color:#2f62bd;transform:scaleX(0.982);">0</div>
<div class="t" style="left:1372.50px;top:782.44px;font-size:12px;color:#1d2329;transform:scaleX(0.922);">EN</div>
<div class="t" style="left:1574.80px;top:782.44px;font-size:12px;color:#1d2329;transform:scaleX(0.982);">6</div>
<div class="t" style="left:1678.00px;top:782.44px;font-size:12px;color:#2f62bd;transform:scaleX(0.982);">6</div>
<div class="t" style="left:1777.50px;top:782.44px;font-size:12px;color:#2f62bd;transform:scaleX(0.982);">0</div>
<div class="t" style="left:1372.50px;top:810.53px;font-size:12px;color:#1d2329;transform:scaleX(0.895);">EN_ASSTEAM</div>
<div class="t" style="left:1574.80px;top:810.53px;font-size:12px;color:#1d2329;transform:scaleX(0.982);">6</div>
<div class="t" style="left:1678.00px;top:810.53px;font-size:12px;color:#2f62bd;transform:scaleX(0.982);">6</div>
<div class="t" style="left:1777.50px;top:810.53px;font-size:12px;color:#2f62bd;transform:scaleX(0.982);">0</div>
<div class="t" style="left:1372.50px;top:838.62px;font-size:12px;color:#1d2329;transform:scaleX(0.867);">EN_DESG</div>
<div class="t" style="left:1574.80px;top:838.62px;font-size:12px;color:#1d2329;transform:scaleX(0.982);">6</div>
<div class="t" style="left:1678.00px;top:838.62px;font-size:12px;color:#2f62bd;transform:scaleX(0.982);">6</div>
<div class="t" style="left:1777.50px;top:838.62px;font-size:12px;color:#2f62bd;transform:scaleX(0.982);">0</div>
<div class="t" style="left:1372.50px;top:866.71px;font-size:12px;color:#1d2329;transform:scaleX(0.927);">EN_MAR</div>
<div class="t" style="left:1574.80px;top:866.71px;font-size:12px;color:#1d2329;transform:scaleX(0.982);">6</div>
<div class="t" style="left:1678.00px;top:866.71px;font-size:12px;color:#2f62bd;transform:scaleX(0.982);">6</div>
<div class="t" style="left:1777.50px;top:866.71px;font-size:12px;color:#2f62bd;transform:scaleX(0.982);">0</div>
<div class="t" style="left:1372.50px;top:894.80px;font-size:12px;color:#1d2329;transform:scaleX(0.936);">EN_MARTEAM</div>
<div class="t" style="left:1574.80px;top:894.80px;font-size:12px;color:#1d2329;transform:scaleX(0.982);">6</div>
<div class="t" style="left:1678.00px;top:894.80px;font-size:12px;color:#2f62bd;transform:scaleX(0.982);">6</div>
<div class="t" style="left:1777.50px;top:894.80px;font-size:12px;color:#2f62bd;transform:scaleX(0.982);">0</div>
<div class="b" style="left:1895px;top:213px;width:17px;height:689px;background:#f0f0f0;"></div>
<svg class="b" style="left:1899px;top:220px" width="8" height="4" viewBox="0 0 8 4"><path d="M0 4 H8 L4.0 0Z" fill="#a3a3a3"/></svg>
<div class="b" style="left:1897px;top:230px;width:13px;height:413px;background:#c1c1c1;"></div>
<svg class="b" style="left:1899px;top:890px" width="8" height="4" viewBox="0 0 8 4"><path d="M0 0 H8 L4.0 4Z" fill="#505050"/></svg>
<div class="b" style="left:1260px;top:903px;width:653px;height:8px;background:#ffffff;"></div>
<div class="b" style="left:1260px;top:902px;width:653px;height:1px;background:#cdd2d7;"></div>
</body></html>
